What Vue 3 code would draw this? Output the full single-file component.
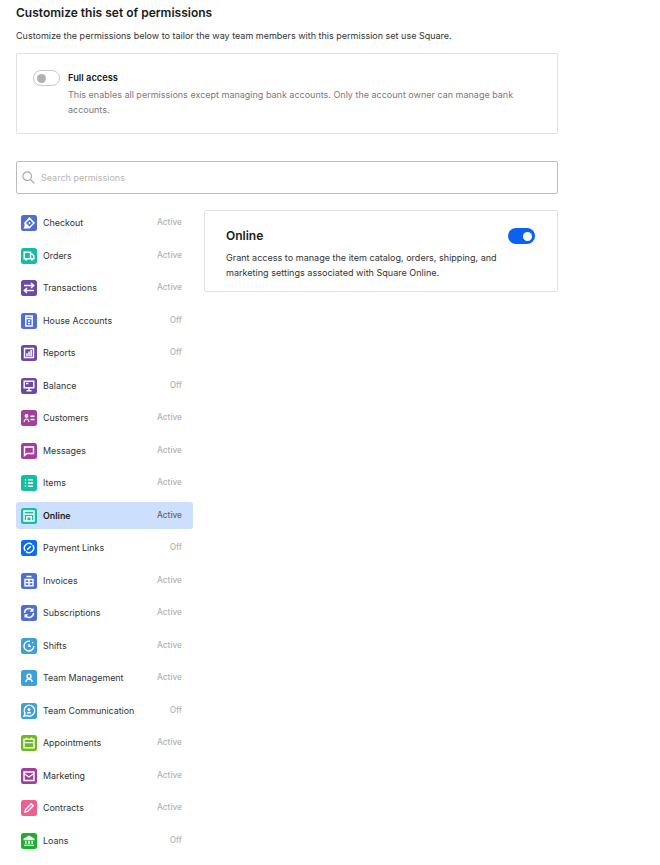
<template>
  <div class="page">
    <h1 class="title">Customize this set of permissions</h1>
    <p class="intro">Customize the permissions below to tailor the way team members with this permission set use Square.</p>

    <div class="full-card">
      <span class="toggle off"><span class="knob"></span></span>
      <div class="full-text">
        <div class="full-title">Full access</div>
        <p class="full-desc">This enables all permissions except managing bank accounts. Only the account owner can manage bank accounts.</p>
      </div>
    </div>

    <div class="search">
      <svg class="search-icon" width="13" height="13" viewBox="0 0 13 13" fill="none" stroke="#a3a3a3" stroke-width="1.1">
        <circle cx="5.2" cy="5.2" r="4.3" />
        <path d="M8.4 8.4l4 4" />
      </svg>
      <span class="search-text">Search permissions</span>
    </div>

    <div class="columns">
      <div class="perm-list">
        <div v-for="item in permissions" :key="item.name" class="perm-row" :class="{ selected: item.name === selected }">
          <svg class="perm-icon" width="16" height="16" viewBox="0 0 16 16">
            <rect width="16" height="16" rx="2.5" :fill="item.color" />
            <path v-if="item.fill" :d="item.fill" fill="#fff" fill-rule="evenodd" />
            <path v-if="item.stroke" :d="item.stroke" fill="none" stroke="#fff" stroke-width="1.4" />
          </svg>
          <span class="perm-name">{{ item.name }}</span>
          <span class="perm-status">{{ item.status }}</span>
        </div>
      </div>

      <div class="detail-card">
        <div class="detail-head">
          <span class="detail-title">Online</span>
          <span class="toggle on"><span class="knob"></span></span>
        </div>
        <p class="detail-desc">Grant access to manage the item catalog, orders, shipping, and marketing settings associated with Square Online.</p>
      </div>
    </div>
  </div>
</template>

<script setup>
const selected = 'Online'

const permissions = [
  { name: 'Checkout', status: 'Active', color: '#4f6fd0', fill: 'M8.5 2L14 8l-5.5 5.500H2.500l1.200-3.200L3 8zM8.500 4.500L5 8l3.500 3.500L12 8zM8.500 6.800L9.700 8 8.500 9.200 7.300 8z' },
  { name: 'Orders', status: 'Active', color: '#12bfa5', stroke: 'M3.200 4.200h6.300v6.600H3.200zM9.500 6.300h1.800l1.600 1.800v2.700H9.500', fill: 'M4 11h2v1.600H4zM10 11h2v1.600h-2z' },
  { name: 'Transactions', status: 'Active', color: '#6a4aa5', stroke: 'M3 5.500h9.500M10 3l2.700 2.500L10 8M13 10.500H3.500M6 8l-2.700 2.500L6 13' },
  { name: 'House Accounts', status: 'Off', color: '#4f6fd0', stroke: 'M4.800 3h6.400v10H4.800zM4.800 5.500h6.400M7 8h2M7 10.500h2' },
  { name: 'Reports', status: 'Off', color: '#6a4aa5', stroke: 'M3.500 3.500h9v9h-9z', fill: 'M5.200 8.200h1.500v3H5.200zM7.300 6.500h1.500v4.700H7.300zM9.400 5h1.500v6.200H9.400z' },
  { name: 'Balance', status: 'Off', color: '#6a4aa5', stroke: 'M3.200 3.200h9.600v6.600H3.200zM8 9.800v3M5.500 12.800h5M5 5.500h2.500' },
  { name: 'Customers', status: 'Active', color: '#a0409c', stroke: 'M9.500 6.300h4M9.500 9.500h4', fill: 'M5.500 4a1.900 1.900 0 110 3.800A1.900 1.900 0 015.500 4zM2.600 12c0-2.400 1.200-3.600 2.900-3.600S8.400 9.600 8.400 12H7.300c0-1.500-.6-2.500-1.800-2.500S3.700 10.500 3.700 12z' },
  { name: 'Messages', status: 'Active', color: '#a0409c', stroke: 'M3.500 4h9v6.500H6L3.500 12.500z' },
  { name: 'Items', status: 'Active', color: '#12bfa5', stroke: 'M7 4.700h5M7 8h5M7 11.300h5', fill: 'M3.800 4h1.400v1.400H3.800zM3.800 7.300h1.400v1.400H3.800zM3.800 10.600h1.400V12H3.800z' },
  { name: 'Online', status: 'Active', color: '#12bfa5', stroke: 'M3 3h10v10H3zM3 6.200h10M5.800 13V8.700h4.400V13' },
  { name: 'Payment Links', status: 'Off', color: '#0a6cf5', stroke: 'M4.400 11A4.700 4.700 0 0 1 11 4.400M11.600 5A4.700 4.700 0 0 1 5 11.600M6.200 9.800l3.600-3.600' },
  { name: 'Invoices', status: 'Active', color: '#4f6fd0', stroke: 'M4 6.500h8v6.300H4zM4 9.600h8M8 6.500v6.300M5.500 3.500h5' },
  { name: 'Subscriptions', status: 'Active', color: '#4f6fd0', stroke: 'M3.500 8a4.500 4.500 0 018-2.800M12.500 8a4.500 4.500 0 01-8 2.800', fill: 'M12.500 2.800v4h-4zM3.500 13.200v-4h4z' },
  { name: 'Shifts', status: 'Active', color: '#3f9fd8', stroke: 'M9 3.300A4.900 4.900 0 1012.800 8M8 6v2.300h1.800', fill: 'M11 4h1.200v1.200H11z' },
  { name: 'Team Management', status: 'Active', color: '#3f9fd8', stroke: 'M8 4.200a2 2 0 110 4 2 2 0 010-4zM4.800 12c.3-1.800 1.400-3 3.200-3s2.900 1.200 3.200 3' },
  { name: 'Team Communication', status: 'Off', color: '#3f9fd8', stroke: 'M3 13l1-2.800A5.200 5.200 0 1112.500 10.800 5.200 5.200 0 016 12.500z', fill: 'M8 5a1.500 1.500 0 110 3 1.500 1.500 0 010-3zM5.800 10.500c.2-1.200 1-1.800 2.200-1.800s2 .6 2.200 1.800z' },
  { name: 'Appointments', status: 'Active', color: '#6fb81e', stroke: 'M3 4.200h10v8.600H3zM3 7.600h10M5.500 2.500v2M10.500 2.500v2' },
  { name: 'Marketing', status: 'Active', color: '#a0409c', stroke: 'M3 4h10v8.500H3zM3 5.500L8 9l5-3.500' },
  { name: 'Contracts', status: 'Active', color: '#ec5f8f', stroke: 'M4 12l.6-2.600 5.600-5.600 2 2-5.600 5.600z' },
  { name: 'Loans', status: 'Off', color: '#1fae2e', fill: 'M8 2.500l5.500 3.300v1.400h-11V5.800zM4 8h1.500v3H4zM7.250 8h1.500v3h-1.500zM10.500 8H12v3h-1.500zM3 11.700h10V13H3z' }
]
</script>

<style>
body {
  background: #fff;
}
</style>

<style scoped>
.page {
  width: 660px;
  height: 865px;
  overflow: hidden;
  box-sizing: border-box;
  padding: 5px 102.5px 0 16px;
  font-family: Inter, "Liberation Sans", sans-serif;
  color: #1a1a1a;
}

.title {
  margin: 0;
  font-size: 12px;
  line-height: 15px;
  font-weight: 600;
}

.intro {
  margin: 9px 0 0;
  font-size: 9px;
  line-height: 14px;
  color: #333;
}

.full-card {
  display: flex;
  gap: 8px;
  box-sizing: border-box;
  height: 81px;
  margin-top: 10px;
  padding: 16px 16px 0;
  border: 1px solid #e2e2e2;
  border-radius: 1px;
}

.toggle {
  display: flex;
  align-items: center;
  flex: none;
  box-sizing: border-box;
  width: 27px;
  height: 16px;
  padding: 0 3px;
  border-radius: 8px;
}

.toggle.off {
  border: 1px solid #c9c9c9;
}

.toggle.off .knob {
  background: #b0b0b0;
}

.toggle.on {
  justify-content: flex-end;
  background: #0a62ee;
}

.toggle.on .knob {
  background: #fff;
}

.knob {
  width: 9px;
  height: 9px;
  border-radius: 50%;
}

.full-title {
  font-size: 9.3px;
  line-height: 15px;
  font-weight: 600;
}

.full-desc {
  margin: 2px 0 0;
  font-size: 9px;
  line-height: 15px;
  color: #7a7a7a;
}

.search {
  display: flex;
  align-items: center;
  box-sizing: border-box;
  height: 33px;
  margin-top: 27px;
  padding: 0 0 1px 5px;
  border: 1px solid #bdbdbd;
  border-radius: 2px;
}

.search-text {
  margin-left: 6px;
  font-size: 9px;
  color: #b5b5b5;
}

.columns {
  display: flex;
  gap: 11.5px;
  margin-top: 16px;
}

.perm-list {
  flex: none;
  width: 176.5px;
  margin-top: -0.5px;
}

.perm-row {
  display: flex;
  align-items: center;
  box-sizing: border-box;
  height: 27px;
  margin-bottom: 5.5px;
  padding: 0 10.5px 0 5px;
  border-radius: 3px;
}

.perm-row.selected {
  background: #cce0fd;
}

.perm-icon {
  flex: none;
}

.perm-name {
  flex: 1;
  margin: -1px 0 0 6px;
  font-size: 8.9px;
  color: #333;
}

.perm-status {
  margin-top: -2px;
  font-size: 8.3px;
  font-weight: 500;
  color: #b3b3b3;
}

.selected .perm-name {
  font-weight: 600;
  color: #1a1a1a;
}

.selected .perm-status {
  color: #666;
}

.detail-card {
  flex: 1;
  box-sizing: border-box;
  height: 82px;
  padding: 17px 22px 0 21px;
  border: 1px solid #e2e2e2;
  border-radius: 2px;
}

.detail-head {
  display: flex;
  align-items: center;
  justify-content: space-between;
}

.detail-title {
  margin-top: -1px;
  font-size: 12px;
  font-weight: 600;
}

.detail-desc {
  margin: 6px 0 0;
  font-size: 9.05px;
  line-height: 15px;
  color: #333;
}
</style>
